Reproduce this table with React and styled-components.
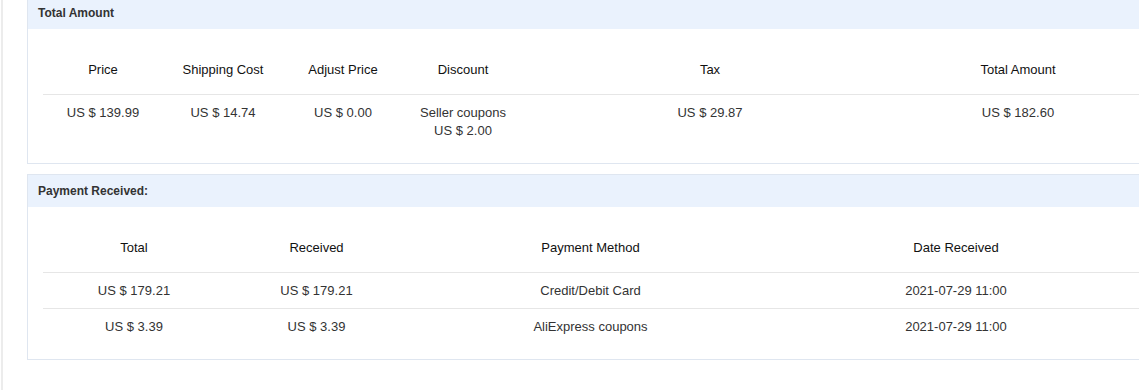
import React from "react";
import styled, { createGlobalStyle } from "styled-components";

const GlobalStyle = createGlobalStyle`
  html, body {
    margin: 0;
    padding: 0;
    background: #fff;
    overflow: hidden;
  }
  body {
    font-family: "Liberation Sans", Arial, sans-serif;
    font-size: 12px;
    color: #333;
  }
`;

const Page = styled.div`
  width: 1139px;
  height: 390px;
  overflow: hidden;
`;

const Frame = styled.div`
  margin-left: 1px;
  margin-top: -4px;
  border-left: 2px solid #ececec;
  padding-left: 24px;
  height: 400px;
  display: flex;
  flex-direction: column;
  gap: 10px;
`;

const Panel = styled.section`
  width: 1128px;
  flex-shrink: 0;
  box-sizing: border-box;
  border: 1px solid #dfe6f0;
  background: #fff;
`;

const PanelHead = styled.div`
  height: 32px;
  line-height: 32px;
  padding: 0 10px;
  background: #eaf2fd;
  font-weight: bold;
  font-size: 12px;
  color: #333;
`;

const PanelBody = styled.div`
  padding: 15px;
`;

const Table = styled.table`
  width: 100%;
  border-collapse: collapse;
  table-layout: fixed;
  font-size: 13px;
`;

const Th = styled.th`
  width: ${(p) => p.$w}px;
  padding: 17px 0 15px;
  line-height: 18px;
  font-weight: normal;
  color: #111;
  text-align: center;
  border-bottom: 1px solid #e6e6e6;
`;

const Td = styled.td`
  padding: 9px 0 8px;
  line-height: 18px;
  color: #333;
  text-align: center;
  vertical-align: top;
`;

const Tr = styled.tr`
  & + & td {
    border-top: 1px solid #e6e6e6;
  }
`;

const amountCols = [
  ["Price", 120],
  ["Shipping Cost", 120],
  ["Adjust Price", 120],
  ["Discount", 120],
  ["Tax", 374],
  ["Total Amount", 242],
];

const paymentCols = [
  ["Total", 182],
  ["Received", 183],
  ["Payment Method", 365],
  ["Date Received", 366],
];

const payments = [
  ["US $ 179.21", "US $ 179.21", "Credit/Debit Card", "2021-07-29 11:00"],
  ["US $ 3.39", "US $ 3.39", "AliExpress coupons", "2021-07-29 11:00"],
];

const HeadRow = ({ cols }) => (
  <thead>
    <tr>
      {cols.map(([label, w]) => (
        <Th key={label} $w={w}>
          {label}
        </Th>
      ))}
    </tr>
  </thead>
);

export default function App() {
  return (
    <Page>
      <GlobalStyle />
      <Frame>
        <Panel>
          <PanelHead>Total Amount</PanelHead>
          <PanelBody>
            <Table>
              <HeadRow cols={amountCols} />
              <tbody>
                <Tr>
                  <Td>US $ 139.99</Td>
                  <Td>US $ 14.74</Td>
                  <Td>US $ 0.00</Td>
                  <Td>
                    Seller coupons
                    <br />
                    US $ 2.00
                  </Td>
                  <Td>US $ 29.87</Td>
                  <Td>US $ 182.60</Td>
                </Tr>
              </tbody>
            </Table>
          </PanelBody>
        </Panel>

        <Panel>
          <PanelHead>Payment Received:</PanelHead>
          <PanelBody>
            <Table>
              <HeadRow cols={paymentCols} />
              <tbody>
                {payments.map((row, i) => (
                  <Tr key={i}>
                    {row.map((cell, j) => (
                      <Td key={j}>{cell}</Td>
                    ))}
                  </Tr>
                ))}
              </tbody>
            </Table>
          </PanelBody>
        </Panel>
      </Frame>
    </Page>
  );
}
